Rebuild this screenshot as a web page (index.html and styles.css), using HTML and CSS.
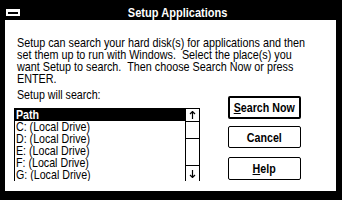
FILE: index.html
```html
<!DOCTYPE html>
<html>
<head>
<meta charset="utf-8">
<link rel="stylesheet" href="styles.css">
</head>
<body>
<div class="window">
  <div class="titlebar">
    <div class="sysmenu"></div>
    <div class="title"><span class="tx">Setup Applications</span></div>
  </div>
  <div class="client">
    <p class="intro">Setup can search your hard disk(s) for applications and then<br>set them up to run with Windows.&nbsp; Select the place(s) you<br>want Setup to search.&nbsp; Then choose Search Now or press<br>ENTER.</p>
    <div class="lower">
      <div class="left">
        <div class="label"><span class="tl">Setup will search:</span></div>
        <div class="list">
          <div class="items">
            <div class="item sel"><span class="tl">Path</span></div>
            <div class="item"><span class="tl">C: (Local Drive)</span></div>
            <div class="item"><span class="tl">D: (Local Drive)</span></div>
            <div class="item"><span class="tl">E: (Local Drive)</span></div>
            <div class="item"><span class="tl">F: (Local Drive)</span></div>
            <div class="item"><span class="tl">G: (Local Drive)</span></div>
          </div>
          <div class="scroll">
            <div class="arrow up"><svg width="7" height="8" viewBox="0 0 7 8"><path d="M3.5 0.5V8M1 3L3.5 0.5L6 3" fill="none" stroke="#000" stroke-width="1.2"/></svg></div>
            <div class="thumb"></div>
            <div class="track"></div>
            <div class="arrow down"><svg width="7" height="8" viewBox="0 0 7 8"><path d="M3.5 0V7.5M1 5L3.5 7.5L6 5" fill="none" stroke="#000" stroke-width="1.2"/></svg></div>
          </div>
        </div>
      </div>
      <div class="buttons">
        <div class="btn default"><span class="tx"><u>S</u>earch Now</span></div>
        <div class="btn cancel"><span class="tx">Cancel</span></div>
        <div class="btn help"><span class="tx"><u>H</u>elp</span></div>
      </div>
    </div>
  </div>
</div>
</body>
</html>
```
FILE: styles.css
```css
html, body {
  margin: 0;
  padding: 0;
  background: #000;
}
body {
  width: 342px;
  height: 200px;
  overflow: hidden;
  font-family: "Liberation Sans", Arial, sans-serif;
  color: #000;
}
.window {
  width: 342px;
  height: 200px;
  box-sizing: border-box;
  padding: 0 6px 9px 5px;
  display: flex;
  flex-direction: column;
  background: #000;
}
.tx {
  display: inline-block;
  transform: scaleX(0.82);
  transform-origin: center center;
  white-space: nowrap;
}
.tl {
  display: inline-block;
  transform: scaleX(0.82);
  transform-origin: left center;
  white-space: nowrap;
}
.titlebar {
  height: 20px;
  flex: none;
  display: flex;
  align-items: flex-start;
  color: #fff;
}
.sysmenu {
  margin: 9px 0 0 1px;
  width: 14px;
  height: 7px;
  background: #fff;
  display: flex;
  align-items: center;
  justify-content: center;
}
.sysmenu::after {
  content: "";
  width: 10px;
  height: 2px;
  background: #000;
}
.title {
  flex: 1;
  text-align: center;
  font-weight: bold;
  font-size: 13px;
  line-height: 14px;
  padding-top: 6px;
}
.title .tx {
  transform: scaleX(0.85);
}
.client {
  flex: 1;
  background: #fff;
  padding: 17px 0 0 9px;
}
.intro {
  margin: 0 0 0 3px;
  font-size: 13px;
  line-height: 12px;
  white-space: nowrap;
  transform: scaleX(0.83);
  transform-origin: left top;
}
.lower {
  display: flex;
  align-items: flex-start;
}
.left {
  width: 186px;
}
.label {
  margin: 4px 0 0 3px;
  font-size: 13px;
  line-height: 12px;
}
.list {
  margin-top: 7px;
  border: 1px solid #000;
  border-bottom: none;
  height: 72px;
  display: flex;
}
.items {
  flex: 1;
  overflow: hidden;
}
.item {
  height: 12px;
  line-height: 12px;
  padding-left: 1px;
  font-size: 13px;
  white-space: nowrap;
}
.item.sel {
  background: #000;
  color: #fff;
  font-weight: bold;
}
.scroll {
  width: 13px;
  border-left: 1px solid #000;
  display: flex;
  flex-direction: column;
}
.arrow {
  height: 12px;
  border-bottom: 1px solid #000;
  display: flex;
  align-items: center;
  justify-content: center;
}
.arrow svg {
  display: block;
}
.thumb {
  height: 16px;
  border-bottom: 1px solid #000;
}
.track {
  flex: 1;
  border-bottom: 1px solid #000;
}
.arrow.down {
  height: 15px;
  border-bottom: none;
}
.buttons {
  margin-left: 28px;
  padding-top: 11px;
  display: flex;
  flex-direction: column;
}
.btn {
  width: 73px;
  box-sizing: border-box;
  border: 1px solid #000;
  border-radius: 2px;
  font-weight: bold;
  font-size: 13px;
  display: flex;
  align-items: center;
  justify-content: center;
}
.btn u {
  text-decoration-thickness: 1px;
  text-underline-offset: 1px;
}
.btn.default {
  height: 23px;
  border-width: 2px;
}
.btn.cancel {
  height: 22px;
  margin-top: 7px;
}
.btn.help {
  height: 23px;
  margin-top: 9px;
}
```
